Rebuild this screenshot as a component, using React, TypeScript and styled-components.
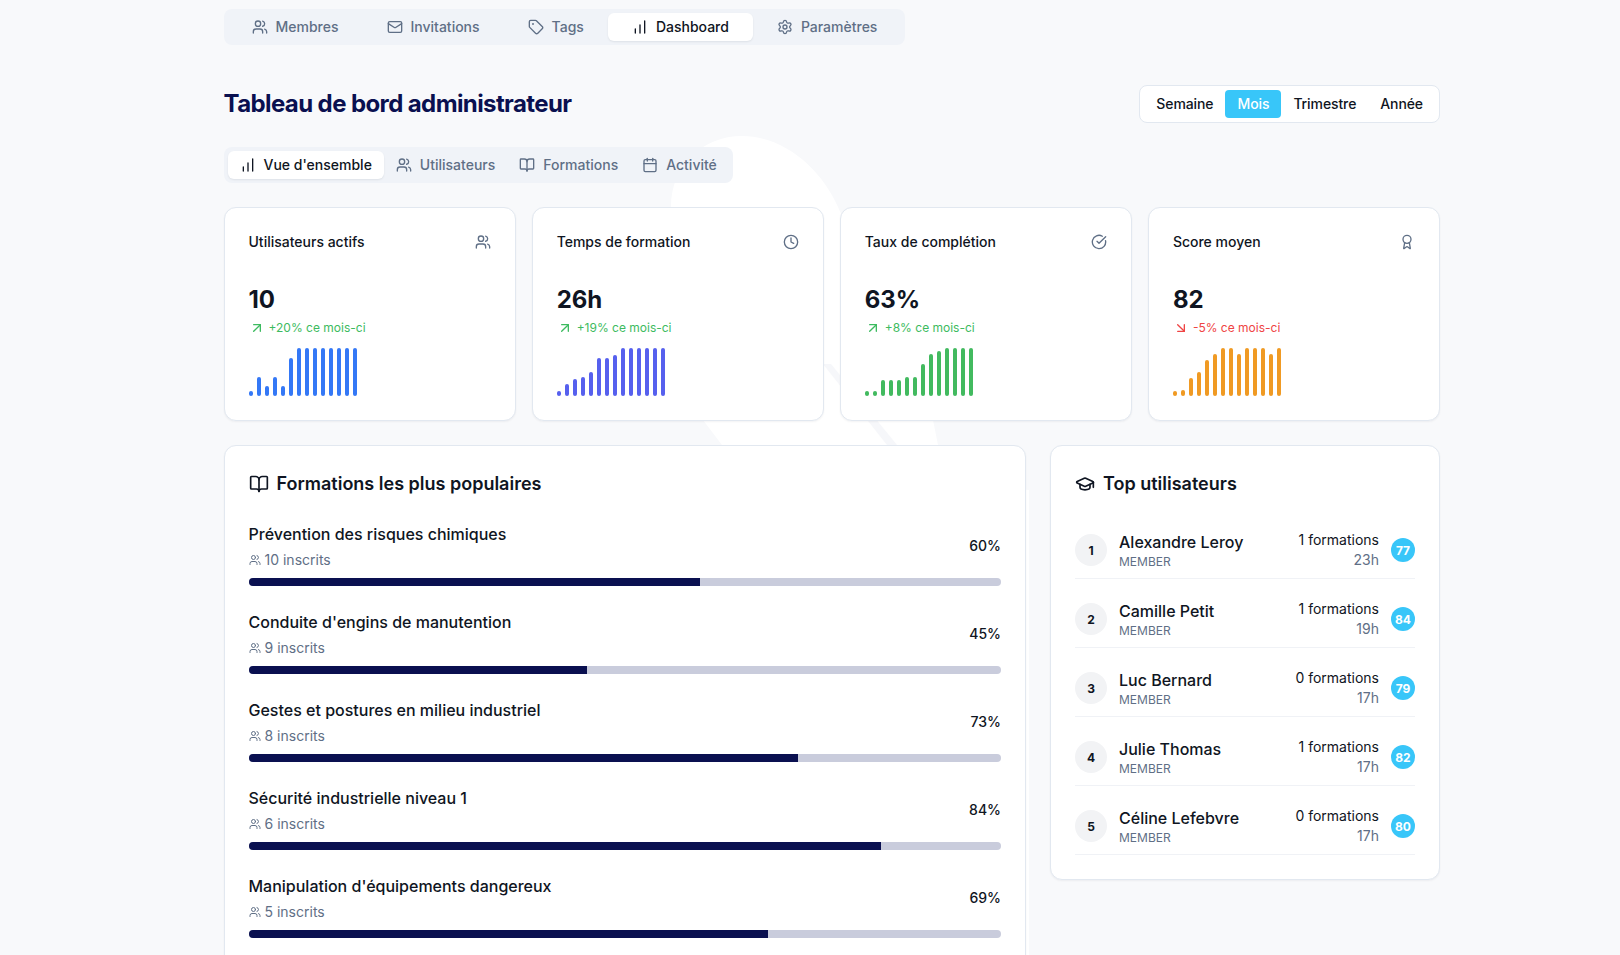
import React from 'react';
import styled, { createGlobalStyle } from 'styled-components';
import {
  ArrowDownRight,
  ArrowUpRight,
  Award,
  BookOpen,
  Calendar,
  ChartNoAxesColumnIncreasing,
  CircleCheckBig,
  Clock,
  GraduationCap,
  Mail,
  Settings,
  Tag,
  Users,
} from 'lucide-react';

const GlobalStyle = createGlobalStyle`
  * { box-sizing: border-box; }
  html, body { margin: 0; padding: 0; }
  body {
    background: #f8f9fb;
    color: #0f1522;
    font-family: Inter, "Noto Sans", sans-serif;
  }
`;

const Page = styled.div`
  position: relative;
  height: 100vh;
  overflow: hidden;
`;

const Watermark = styled.svg`
  position: absolute;
  top: 0;
  left: 0;
  z-index: 0;
`;

const Content = styled.main`
  position: relative;
  z-index: 1;
  width: 1216.5px;
  margin-left: 223.5px;
  padding-top: 9px;
`;

const TabList = styled.div<{ $width?: number }>`
  display: flex;
  width: ${({ $width }) => ($width ? `${$width}px` : 'auto')};
  height: 36px;
  padding: 4px;
  border-radius: 8px;
  background: #f0f3f8;
`;

const Tab = styled.button<{ $active?: boolean; $wide?: boolean }>`
  display: flex;
  flex: ${({ $wide }) => ($wide ? '1 1 auto' : '0 0 auto')};
  align-items: center;
  justify-content: center;
  gap: 8px;
  padding: 0 ${({ $wide }) => ($wide ? 24 : 12)}px;
  border: 0;
  border-radius: 6px;
  background: ${({ $active }) => ($active ? '#ffffff' : 'transparent')};
  box-shadow: ${({ $active }) => ($active ? '0 1px 2px rgba(15, 23, 42, 0.08)' : 'none')};
  color: ${({ $active }) => ($active ? '#0f1522' : '#5f6f86')};
  font: 500 14px/20px Inter, sans-serif;
`;

const HeaderRow = styled.header`
  display: flex;
  align-items: center;
  justify-content: space-between;
  margin: 40px 0 24px;
`;

const Title = styled.h1`
  margin: 0;
  color: #0a1050;
  font-size: 24px;
  font-weight: 700;
  line-height: 32px;
  letter-spacing: -0.6px;
`;

const PeriodPicker = styled.div`
  display: flex;
  height: 38px;
  padding: 4px;
  border: 1px solid #e2e8f0;
  border-radius: 8px;
  background: #ffffff;
`;

const Period = styled.button<{ $active?: boolean }>`
  padding: 0 12px;
  border: 0;
  border-radius: 4px;
  background: ${({ $active }) => ($active ? '#38c6f9' : 'transparent')};
  color: ${({ $active }) => ($active ? '#ffffff' : '#0f1522')};
  font: 500 14px/20px Inter, sans-serif;
  letter-spacing: -0.1px;
`;

const StatGrid = styled.section`
  display: grid;
  grid-template-columns: repeat(4, 1fr);
  gap: 16px;
  margin: 24px 0;
`;

const Card = styled.div`
  border: 1px solid #e2e8f0;
  border-radius: 12px;
  background: #ffffff;
  box-shadow: 0 1px 2px rgba(15, 23, 42, 0.05);
`;

const StatCard = styled(Card)`
  height: 214px;
  padding: 24px;
`;

const StatHead = styled.div`
  display: flex;
  align-items: center;
  justify-content: space-between;
  height: 20px;
  margin-bottom: 32px;
  color: #5f6f86;
`;

const StatLabel = styled.span`
  margin-top: -2px;
  color: #0f1522;
  font-size: 14px;
  font-weight: 500;
`;

const StatValue = styled.div`
  font-size: 24px;
  font-weight: 700;
  line-height: 32px;
`;

const Trend = styled.div<{ $down?: boolean }>`
  display: flex;
  align-items: center;
  gap: 4px;
  margin-top: 4px;
  color: ${({ $down }) => ($down ? '#ef4444' : '#3dbb60')};
  font-size: 12px;
  line-height: 16px;
`;

const Bars = styled.div`
  display: flex;
  align-items: flex-end;
  gap: 4px;
  height: 48px;
  margin-top: 12px;
`;

const Bar = styled.span<{ $color: string }>`
  width: 4px;
  border-radius: 2px;
  background: ${({ $color }) => $color};
`;

const Columns = styled.section`
  display: grid;
  grid-template-columns: 802.5px 1fr;
  align-items: start;
  gap: 24px;
`;

const Panel = styled(Card)`
  padding: 24px;
`;

const PanelTitle = styled.h2`
  display: flex;
  align-items: center;
  gap: 8px;
  margin: 0 0 24px;
  font-size: 18px;
  font-weight: 600;
  line-height: 28px;
`;

const Course = styled.div`
  margin-bottom: 24px;
`;

const CourseHead = styled.div`
  display: flex;
  align-items: center;
  justify-content: space-between;
  margin-bottom: 8px;
`;

const CourseName = styled.div`
  font-size: 16px;
  font-weight: 500;
  line-height: 24px;
`;

const Enrolled = styled.div`
  display: flex;
  align-items: center;
  gap: 4px;
  margin-top: 4px;
  color: #5f6f86;
  font-size: 14px;
  line-height: 20px;
`;

const Percent = styled.span`
  margin-bottom: 2px;
  font-size: 14px;
  font-weight: 500;
`;

const Track = styled.div`
  height: 8px;
  overflow: hidden;
  border-radius: 4px;
  background: #c9ccdc;
`;

const Fill = styled.div`
  height: 100%;
  background: #0a1050;
`;

const UserList = styled.div`
  display: flex;
  flex-direction: column;
  gap: 20px;
  padding-top: 8px;
`;

const UserRow = styled.div`
  display: flex;
  align-items: center;
  gap: 12px;
  padding-bottom: 8px;
  border-bottom: 1px solid #f0f2f6;
`;

const Rank = styled.span`
  display: flex;
  align-items: center;
  justify-content: center;
  width: 32px;
  height: 32px;
  border-radius: 50%;
  background: #f2f3f5;
  font-size: 12px;
  font-weight: 700;
`;

const UserInfo = styled.div`
  flex: 1;
`;

const UserName = styled.div`
  font-size: 16px;
  font-weight: 500;
  line-height: 24px;
`;

const UserRole = styled.div`
  color: #5f6f86;
  font-size: 12px;
  line-height: 16px;
`;

const UserStats = styled.div`
  font-size: 14px;
  line-height: 20px;
  text-align: right;
`;

const Hours = styled.div`
  color: #5f6f86;
`;

const Score = styled.span`
  display: flex;
  align-items: center;
  justify-content: center;
  width: 24px;
  height: 24px;
  border-radius: 50%;
  background: #38c6f9;
  color: #ffffff;
  font-size: 12px;
  font-weight: 700;
`;

const stats = [
  {
    label: 'Utilisateurs actifs',
    icon: Users,
    value: '10',
    trend: '+20% ce mois-ci',
    color: '#3478f6',
    bars: [5, 19, 10, 19, 10, 38, 48, 48, 48, 48, 48, 48, 48, 48],
  },
  {
    label: 'Temps de formation',
    icon: Clock,
    value: '26h',
    trend: '+19% ce mois-ci',
    color: '#5660ee',
    bars: [5, 12, 17, 19, 24, 38, 38, 41, 48, 48, 48, 48, 48, 48],
  },
  {
    label: 'Taux de complétion',
    icon: CircleCheckBig,
    value: '63%',
    trend: '+8% ce mois-ci',
    color: '#42ba5f',
    bars: [5, 5, 16, 16, 16, 19, 19, 32, 42, 45, 48, 48, 48, 48],
  },
  {
    label: 'Score moyen',
    icon: Award,
    value: '82',
    trend: '-5% ce mois-ci',
    down: true,
    color: '#f09a23',
    bars: [5, 6, 18, 24, 36, 42, 48, 48, 42, 48, 48, 48, 42, 48],
  },
];

const courses = [
  { name: 'Prévention des risques chimiques', enrolled: 10, percent: 60 },
  { name: "Conduite d'engins de manutention", enrolled: 9, percent: 45 },
  { name: 'Gestes et postures en milieu industriel', enrolled: 8, percent: 73 },
  { name: 'Sécurité industrielle niveau 1', enrolled: 6, percent: 84 },
  { name: "Manipulation d'équipements dangereux", enrolled: 5, percent: 69 },
];

const users = [
  { name: 'Alexandre Leroy', formations: 1, hours: '23h', score: 77 },
  { name: 'Camille Petit', formations: 1, hours: '19h', score: 84 },
  { name: 'Luc Bernard', formations: 0, hours: '17h', score: 79 },
  { name: 'Julie Thomas', formations: 1, hours: '17h', score: 82 },
  { name: 'Céline Lefebvre', formations: 0, hours: '17h', score: 80 },
];

export default function App() {
  return (
    <Page>
      <GlobalStyle />
      <Watermark width="1620" height="955" aria-hidden="true">
        <path
          d="M671 207C671 165 703 136 742 136C785 136 822 170 838 207L933 420L945 480L1029 490L1029 955L800 955L722 445L703 420L680 300Z"
          fill="#ffffff"
        />
        <path d="M823 364L831 364L897 445L887 445Z" fill="#f6f7fa" />
      </Watermark>
      <Content>
        <TabList $width={681}>
          <Tab $wide><Users size={16} />Membres</Tab>
          <Tab $wide><Mail size={16} />Invitations</Tab>
          <Tab $wide><Tag size={16} />Tags</Tab>
          <Tab $wide $active><ChartNoAxesColumnIncreasing size={16} />Dashboard</Tab>
          <Tab $wide><Settings size={16} />Paramètres</Tab>
        </TabList>

        <HeaderRow>
          <Title>Tableau de bord administrateur</Title>
          <PeriodPicker>
            <Period>Semaine</Period>
            <Period $active>Mois</Period>
            <Period>Trimestre</Period>
            <Period>Année</Period>
          </PeriodPicker>
        </HeaderRow>

        <TabList $width={509}>
          <Tab $active><ChartNoAxesColumnIncreasing size={16} />Vue d'ensemble</Tab>
          <Tab><Users size={16} />Utilisateurs</Tab>
          <Tab><BookOpen size={16} />Formations</Tab>
          <Tab><Calendar size={16} />Activité</Tab>
        </TabList>

        <StatGrid>
          {stats.map((stat) => (
            <StatCard key={stat.label}>
              <StatHead>
                <StatLabel>{stat.label}</StatLabel>
                <stat.icon size={16} />
              </StatHead>
              <StatValue>{stat.value}</StatValue>
              <Trend $down={stat.down}>
                {stat.down ? <ArrowDownRight size={16} /> : <ArrowUpRight size={16} />}
                {stat.trend}
              </Trend>
              <Bars>
                {stat.bars.map((h, i) => (
                  <Bar key={i} $color={stat.color} style={{ height: h }} />
                ))}
              </Bars>
            </StatCard>
          ))}
        </StatGrid>

        <Columns>
          <Panel>
            <PanelTitle><BookOpen size={20} />Formations les plus populaires</PanelTitle>
            {courses.map((course) => (
              <Course key={course.name}>
                <CourseHead>
                  <div>
                    <CourseName>{course.name}</CourseName>
                    <Enrolled><Users size={12} />{course.enrolled} inscrits</Enrolled>
                  </div>
                  <Percent>{course.percent}%</Percent>
                </CourseHead>
                <Track>
                  <Fill style={{ width: `${course.percent}%` }} />
                </Track>
              </Course>
            ))}
          </Panel>

          <Panel>
            <PanelTitle><GraduationCap size={20} />Top utilisateurs</PanelTitle>
            <UserList>
              {users.map((user, i) => (
                <UserRow key={user.name}>
                  <Rank>{i + 1}</Rank>
                  <UserInfo>
                    <UserName>{user.name}</UserName>
                    <UserRole>MEMBER</UserRole>
                  </UserInfo>
                  <UserStats>
                    {user.formations} formations
                    <Hours>{user.hours}</Hours>
                  </UserStats>
                  <Score>{user.score}</Score>
                </UserRow>
              ))}
            </UserList>
          </Panel>
        </Columns>
      </Content>
    </Page>
  );
}
